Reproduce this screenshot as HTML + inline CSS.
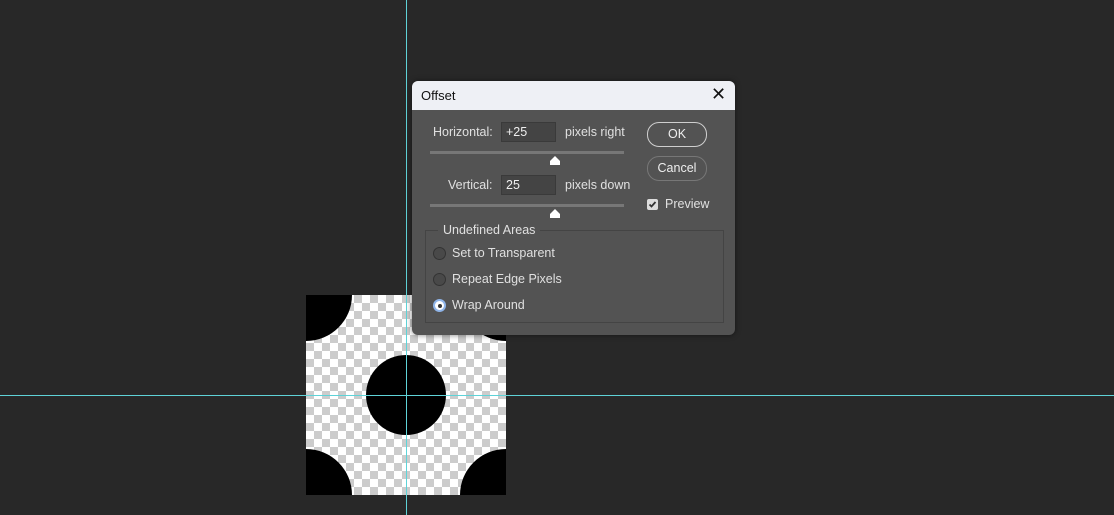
<!DOCTYPE html>
<html style="overflow:hidden;height:515px"><head><style>
body{margin:0;width:1114px;height:515px;background:#282828;position:relative;overflow:hidden;font-family:"Liberation Sans",sans-serif;}
.abs{position:absolute}
.dlg{left:412px;top:81px;width:323px;height:254px;background:#535353;border-radius:6px;overflow:hidden;box-shadow:0 0 6px rgba(0,0,0,.5);z-index:5}
.title{left:0;top:0;width:323px;height:29px;background:#eef0f5;color:#111;font-size:13px}
.lbl{color:#e0e0e0;font-size:12.5px}
.inp{background:#444;border:1px solid #3a3a3a;color:#eee;font-size:12.5px;width:55px;height:20px;box-sizing:border-box;padding:2px 4px}
.btn{border:1.5px solid #cfcfcf;border-radius:12px;color:#eee;font-size:12.5px;text-align:center;box-sizing:border-box}
.track{height:3px;background:#777;width:194px;left:18px}
.radio{width:11px;height:11px;border-radius:50%;border:1px solid #333;background:#494949}
</style></head><body>
<svg class="abs" style="left:306px;top:295px" width="200" height="200">
<defs><pattern id="c" width="16" height="16" patternUnits="userSpaceOnUse"><rect width="16" height="16" fill="#fff"/><rect width="8" height="8" fill="#ccc"/><rect x="8" y="8" width="8" height="8" fill="#ccc"/></pattern></defs>
<rect width="200" height="200" fill="url(#c)"/>
<circle cx="100" cy="100" r="40" fill="#000"/>
<circle cx="0" cy="0" r="46" fill="#000"/><circle cx="200" cy="0" r="46" fill="#000"/>
<circle cx="0" cy="200" r="46" fill="#000"/><circle cx="200" cy="200" r="46" fill="#000"/>
</svg>
<svg class="abs" style="left:0;top:0;z-index:2" width="1114" height="515"><line x1="406.5" y1="0" x2="406.5" y2="515" stroke="#5fd3d8" stroke-width="1"/><line x1="0" y1="395.5" x2="1114" y2="395.5" stroke="#5fd3d8" stroke-width="1"/></svg>
<div class="abs dlg">
<div class="abs title"><span class="abs" style="left:9px;top:7px">Offset</span><span class="abs" style="left:299px;top:3px;font-size:18px">✕</span></div>
<span class="abs lbl" style="left:21px;top:44px">Horizontal:</span>
<div class="abs inp" style="left:89px;top:41px">+25</div>
<span class="abs lbl" style="left:153px;top:44px">pixels right</span>
<div class="abs track" style="top:70px"></div>
<svg class="abs" style="left:137px;top:74px" width="12" height="11"><path d="M6 1 L11 6 V10 H1 V6Z" fill="#fff"/></svg>
<span class="abs lbl" style="left:36px;top:97px">Vertical:</span>
<div class="abs inp" style="left:89px;top:94px">25</div>
<span class="abs lbl" style="left:153px;top:97px">pixels down</span>
<div class="abs track" style="top:123px"></div>
<svg class="abs" style="left:137px;top:127px" width="12" height="11"><path d="M6 1 L11 6 V10 H1 V6Z" fill="#fff"/></svg>
<div class="abs btn" style="left:235px;top:41px;width:60px;height:25px;line-height:22px">OK</div>
<div class="abs btn" style="left:235px;top:75px;width:60px;height:25px;line-height:22px;border-color:#777">Cancel</div>
<div class="abs" style="left:235px;top:118px;width:11px;height:11px;background:#ddd;border-radius:2px"><svg width="11" height="11" style="display:block"><path d="M2.5 5.5 L4.5 7.5 L8.5 3" stroke="#333" stroke-width="1.8" fill="none"/></svg></div>
<span class="abs lbl" style="left:253px;top:116px">Preview</span>
<div class="abs" style="left:13px;top:149px;width:299px;height:93px;border:1px solid #444;box-sizing:border-box"></div>
<span class="abs lbl" style="left:26px;top:142px;background:#535353;padding:0 5px;">Undefined Areas</span>
<div class="abs radio" style="left:21px;top:166px"></div><span class="abs lbl" style="left:40px;top:165px">Set to Transparent</span>
<div class="abs radio" style="left:21px;top:192px"></div><span class="abs lbl" style="left:40px;top:191px">Repeat Edge Pixels</span>
<div class="abs radio" style="left:21px;top:218px;background:#fff;border:2px solid #8fb4e8;width:9px;height:9px"><div style="position:absolute;left:2.5px;top:2.5px;width:4px;height:4px;border-radius:50%;background:#333"></div></div>
<span class="abs lbl" style="left:40px;top:217px">Wrap Around</span>
</div>
</body></html>
